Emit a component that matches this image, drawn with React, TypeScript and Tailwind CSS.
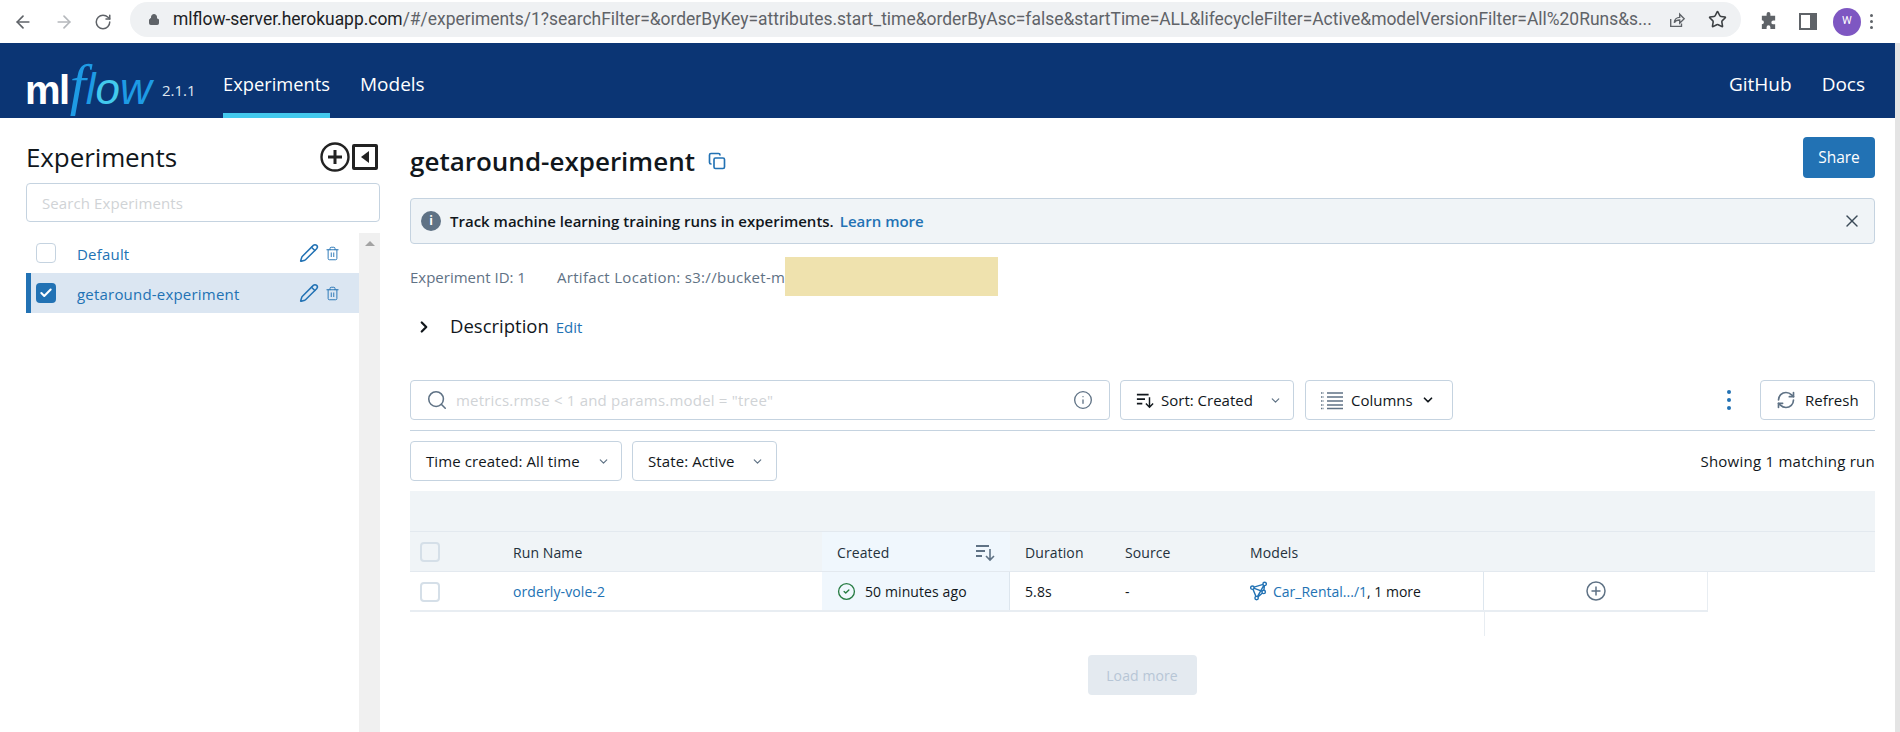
import React from 'react';
import { ArrowLeft, ArrowRight, RotateCw, Lock, Star, Pencil, Trash2, Check, ChevronDown, ChevronRight, Search, Info, X, Copy, RefreshCw, CheckCircle2 } from 'lucide-react';

const SortIcon = ({ className }: { className?: string }) => (
  <svg viewBox="0 0 20 20" className={className} fill="none" stroke="currentColor" strokeWidth="2">
    <path d="M1 4h13M1 9h9M1 14h6" />
    <path d="M15 7v11M11 14l4 4 4-4" strokeWidth="1.6" />
  </svg>
);

const ColumnsIcon = () => (
  <svg viewBox="0 0 22 20" className="w-[22px] h-[20px] text-[#5f7285]" fill="none" stroke="currentColor" strokeWidth="1.500">
    <path d="M6 3h16M6 7h16M6 11h16M6 15h16M6 18.500h16" />
    <path d="M0 3h3M0 7h3M0 11h3M0 15h3M0 18.500h3" strokeDasharray="1.500 1" />
  </svg>
);

const ModelIcon = () => (
  <svg viewBox="0 0 18 20" className="w-[17px] h-[20px] text-[#2272b4]" fill="none" stroke="currentColor" strokeWidth="1.5">
    <path d="M2.500 6.500L15.500 2.500 14.500 11 7 17.500 2.500 6.500zM2.500 6.500L14.500 11M15.500 2.500L7 17.500" />
    <circle cx="2.5" cy="6.5" r="1.8" fill="white" />
    <circle cx="15.5" cy="2.5" r="1.8" fill="white" />
    <circle cx="14.5" cy="11" r="1.8" fill="white" />
    <circle cx="7" cy="17.5" r="1.8" fill="white" />
  </svg>
);

function Logo() {
  return (
    <div className="w-[162px] pl-[25px] flex items-baseline pt-[22px] font-['Liberation_Sans',sans-serif]">
      <span className="text-[40px] leading-[40px] font-bold tracking-[-1.5px]">ml</span>
      <span className="text-[58px] leading-[40px] italic text-[#1e9be4] font-['Liberation_Serif',serif] ml-[1px]">f</span>
      <span className="text-[44px] leading-[40px] italic text-[#1e9be4]">
        l<span className="text-[#43c9ed]">o</span>w
      </span>
    </div>
  );
}

function Header() {
  return (
    <div className="h-[75px] bg-[#0b3574] flex items-stretch text-white">
      <Logo />
      <span className="text-[15px] mt-[36px] h-[20px] w-[61px] text-[#dfe7f0]">2.1.1</span>
      <div className="w-[107px] flex flex-col items-center">
        <span className="text-[18.3px] leading-[24px] mt-[29px] whitespace-nowrap">Experiments</span>
        <div className="mt-auto h-[5px] w-full bg-[#43c9ed]" />
      </div>
      <span className="ml-[30px] text-[19px] leading-[24px] mt-[29px]">Models</span>
      <span className="ml-auto text-[19px] leading-[24px] mt-[29px]">GitHub</span>
      <span className="ml-[30px] mr-[30px] text-[19px] leading-[24px] mt-[29px]">Docs</span>
    </div>
  );
}

function ChromeBar() {
  return (
    <div className="h-[43px] bg-white flex items-center text-[#5f6368] font-['Roboto',sans-serif]">
      <ArrowLeft className="ml-[13px] w-[20px] h-[20px]" strokeWidth={2} />
      <ArrowRight className="ml-[21px] w-[20px] h-[20px] text-[#b5b8bc]" strokeWidth={2} />
      <RotateCw className="ml-[20px] w-[18px] h-[18px]" strokeWidth={2} />
      <div className="ml-[18px] w-[1611px] h-[35px] -mt-[4px] rounded-full bg-[#eff1f3] flex items-center pl-[18px] pr-[14px]">
        <Lock className="w-[12px] h-[13px] fill-[#5f6368]" strokeWidth={2} />
        <span className="ml-[13px] text-[17.45px] whitespace-nowrap text-[#5f6368]">
          <span className="text-[#202124]">mlflow-server.herokuapp.com</span>/#/experiments/1?searchFilter=&amp;orderByKey=attributes.start_time&amp;orderByAsc=false&amp;startTime=ALL&amp;lifecycleFilter=Active&amp;modelVersionFilter=All%20Runs&amp;s...
        </span>
        <svg viewBox="0 0 20 20" className="ml-auto w-[18px] h-[18px]" fill="none" stroke="currentColor" strokeWidth="1.5">
          <path d="M3 9v8h12v-3M7 13c0-4 3-6 6-6V3.5l5 5-5 5V10c-3 0-5 1-6 3z" />
        </svg>
        <Star className="ml-[22px] w-[19px] h-[19px] text-[#3c4043]" strokeWidth={2} />
      </div>
      <svg viewBox="0 0 20 20" className="ml-[18px] w-[19px] h-[19px] fill-[#5f6368]">
        <path d="M8 2a2 2 0 0 1 4 0v2h5v5h-2a2 2 0 0 0 0 4h2v5h-5v-2a2 2 0 0 0-4 0v2H3v-5a2.2 2.2 0 0 0 0-4.400V4h5V2z" />
      </svg>
      <div className="ml-[21px] w-[18px] h-[17px] border-[2px] border-r-[7px] border-[#5f6368]" />
      <div className="ml-[16px] w-[28px] h-[28px] rounded-full bg-[#7e57c2] text-white text-[11px] flex items-center justify-center">W</div>
      <div className="ml-[9px] flex flex-col gap-[3px]">
        <div className="w-[3px] h-[3px] rounded-full bg-[#5f6368]" />
        <div className="w-[3px] h-[3px] rounded-full bg-[#5f6368]" />
        <div className="w-[3px] h-[3px] rounded-full bg-[#5f6368]" />
      </div>
    </div>
  );
}

function ExperimentRow({ name, selected }: { name: string; selected?: boolean }) {
  return (
    <div className={`h-[40px] flex items-center text-[#2272b4] ${selected ? 'bg-[#dbe6f2] border-l-[5px] border-[#2272b4] pl-[5px]' : 'pl-[10px]'}`}>
      {selected ? (
        <div className="w-[20px] h-[20px] rounded-[4px] bg-[#2272b4] flex items-center justify-center">
          <Check className="w-[14px] h-[14px] text-white" strokeWidth={3.5} />
        </div>
      ) : (
        <div className="w-[20px] h-[20px] rounded-[4px] border border-[#c5d3e0] bg-white" />
      )}
      <span className="ml-[21px] mt-[2px] text-[15px] tracking-[0.2px] flex-1">{name}</span>
      <Pencil className="w-[20px] h-[20px]" strokeWidth={1.8} />
      <Trash2 className="ml-[6px] mr-[19px] w-[15px] h-[15px]" strokeWidth={1.5} />
    </div>
  );
}

function Sidebar() {
  return (
    <div className="ml-[26px] w-[354px] flex flex-col">
      <div className="h-[65px] pt-[13px] flex items-center">
        <h1 className="text-[26px] leading-[34px] font-medium tracking-[-0.1px] text-[#11171c] flex-1">Experiments</h1>
        <svg viewBox="0 0 30 30" className="w-[30px] h-[30px] text-[#222]" fill="none" stroke="currentColor" strokeWidth="2.4">
          <circle cx="15" cy="15" r="13.500" />
          <path d="M15 8v14M8 15h14" strokeWidth="3" />
        </svg>
        <div className="ml-[2px] mr-[2px] w-[26px] h-[26px] border-[3px] border-[#222] rounded-[2px] flex items-center justify-center">
          <div className="w-0 h-0 border-y-[6px] border-y-transparent border-r-[8px] border-r-[#222]" />
        </div>
      </div>
      <div className="h-[39px] border border-[#c5d3e0] rounded-[4px] flex items-center pl-[15px] pt-[2px] text-[15px] tracking-[0.1px] text-[#d0d3d6]">Search Experiments</div>
      <div className="mt-[11px] flex-1 flex">
        <div className="w-[333px]">
          <ExperimentRow name="Default" />
          <ExperimentRow name="getaround-experiment" selected />
        </div>
        <div className="w-[21px] bg-[#f0f0f0] flex justify-center pt-[8px]">
          <div className="w-0 h-0 border-x-[5px] border-x-transparent border-b-[5px] border-b-[#a3a3a3]" />
        </div>
      </div>
    </div>
  );
}

function Toolbar() {
  return (
    <div className="mt-[33px] flex h-[40px] text-[15px] text-[#11171c]">
      <div className="w-[700px] border border-[#c5d3e0] rounded-[4px] flex items-center pl-[15px] pr-[16px]">
        <Search className="w-[22px] h-[22px] text-[#5f7285]" strokeWidth={1.7} />
        <span className="ml-[8px] flex-1 text-[#d0d3d6] tracking-[0.2px]">metrics.rmse &lt; 1 and params.model = "tree"</span>
        <Info className="w-[20px] h-[20px] text-[#5f7285]" strokeWidth={1.6} />
      </div>
      <div className="ml-[10px] w-[174px] border border-[#c5d3e0] rounded-[4px] flex items-center pl-[15px]">
        <SortIcon className="w-[18px] h-[18px]" />
        <span className="ml-[7px]">Sort: Created</span>
        <ChevronDown className="ml-[16px] w-[13px] h-[13px] text-[#5f7285]" strokeWidth={2.2} />
      </div>
      <div className="ml-[11px] w-[148px] border border-[#c5d3e0] rounded-[4px] flex items-center pl-[15px]">
        <ColumnsIcon />
        <span className="ml-[8px]">Columns</span>
        <ChevronDown className="ml-[8px] w-[14px] h-[14px]" strokeWidth={3} />
      </div>
      <div className="ml-auto mr-[29px] flex flex-col justify-center gap-[4px]">
        <div className="w-[4px] h-[4px] rounded-full bg-[#2272b4]" />
        <div className="w-[4px] h-[4px] rounded-full bg-[#2272b4]" />
        <div className="w-[4px] h-[4px] rounded-full bg-[#2272b4]" />
      </div>
      <div className="w-[115px] border border-[#c5d3e0] rounded-[4px] flex items-center pl-[15px]">
        <RefreshCw className="w-[20px] h-[20px] text-[#5f7285]" strokeWidth={2} />
        <span className="ml-[9px]">Refresh</span>
      </div>
    </div>
  );
}

function RunsTable() {
  return (
    <div className="mt-[10px] text-[14px] tracking-[0.1px]">
      <div className="h-[41px] bg-[#f0f4f7] border-b border-[#e3e9ef]" />
      <div className="h-[40px] bg-[#f0f4f7] border-b border-[#e3e9ef] flex items-center text-[#24313c]">
        <div className="ml-[10px] w-[20px] h-[20px] rounded-[4px] border-[2px] border-[#d5dfe8]" />
        <span className="ml-[73px] w-[309px] mt-[1px]">Run Name</span>
        <div className="w-[188px] h-full bg-[#f0f7fd] flex items-center pl-[15px] pr-[15px]">
          <span className="flex-1 mt-[1px]">Created</span>
          <SortIcon className="w-[20px] h-[20px] text-[#5f7285]" />
        </div>
        <span className="ml-[15px] w-[100px] mt-[1px]">Duration</span>
        <span className="w-[125px] mt-[1px]">Source</span>
        <span className="mt-[1px]">Models</span>
      </div>
      <div className="h-[40px] border-b-[2px] border-[#e8edf2] flex items-stretch w-[1298px] text-[#11171c]">
        <div className="ml-[10px] mt-[10px] w-[20px] h-[20px] rounded-[4px] border-[2px] border-[#d5dfe8]" />
        <span className="ml-[73px] w-[309px] self-center text-[#2272b4]">orderly-vole-2</span>
        <div className="w-[188px] bg-[#f0f7fd] border-r border-[#dde6ee] flex items-center pl-[15px]">
          <CheckCircle2 className="w-[19px] h-[19px] text-[#277c43]" strokeWidth={1.7} />
          <span className="ml-[9px]">50 minutes ago</span>
        </div>
        <span className="ml-[15px] w-[100px] self-center">5.8s</span>
        <span className="w-[125px] self-center">-</span>
        <div className="w-[234px] flex items-center border-r border-[#dde6ee]">
          <ModelIcon />
          <span className="ml-[6px] text-[#2272b4] tracking-normal">Car_Rental.../1</span>
          <span className="tracking-normal">, 1 more</span>
        </div>
        <div className="flex-1 border-r border-[#e8edf2] flex items-center justify-center">
          <svg viewBox="0 0 20 20" className="w-[20px] h-[20px] text-[#5f7285]" fill="none" stroke="currentColor" strokeWidth="1.500">
            <circle cx="10" cy="10" r="9" />
            <path d="M10 5.500v9M5.500 10h9" />
          </svg>
        </div>
      </div>
      <div className="h-[24px] w-[1075px] border-r border-[#e8edf2]" />
      <div className="mt-[19px] flex justify-center">
        <div className="-ml-[1px] w-[109px] h-[40px] rounded-[4px] bg-[#e4eaf0] text-[#b7c6d6] flex items-center justify-center">Load more</div>
      </div>
    </div>
  );
}

function MainPanel() {
  return (
    <div className="ml-[30px] w-[1465px] flex flex-col">
      <div className="mt-[19px] h-[41px] flex items-start">
        <h2 className="mt-[7px] text-[26px] leading-[34px] font-semibold text-[#11171c]">getaround-experiment</h2>
        <Copy className="ml-[13px] mt-[15px] w-[18px] h-[18px] text-[#2272b4]" strokeWidth={2.2} />
        <div className="ml-auto w-[72px] h-[41px] rounded-[4px] bg-[#2272b4] text-white text-[15.500px] flex items-center justify-center">Share</div>
      </div>
      <div className="mt-[20px] h-[46px] rounded-[4px] border border-[#c5d3e0] bg-[#f0f4f7] flex items-center pl-[10px] pr-[12px] text-[15px]">
        <div className="w-[20px] h-[20px] rounded-full bg-[#5f7285] text-white text-[12px] font-bold flex items-center justify-center">i</div>
        <span className="ml-[9px] mt-[1px] font-semibold text-[#11171c]">Track machine learning training runs in experiments.</span>
        <span className="ml-[6px] mt-[1px] font-semibold text-[#2272b4]">Learn more</span>
        <X className="ml-auto w-[20px] h-[20px] text-[#3b4a58]" strokeWidth={1.7} />
      </div>
      <div className="mt-[13px] h-[39px] flex items-center text-[15px] text-[#5f7285]">
        <span className="mt-[2px]">Experiment ID: 1</span>
        <span className="ml-[31px] mt-[2px] tracking-[0.3px]">Artifact Location: s3://bucket-m</span>
        <div className="w-[213px] h-[39px] bg-[#efe2ae]" />
      </div>
      <div className="mt-[11px] h-[40px] flex items-center">
        <ChevronRight className="ml-[5px] w-[18px] h-[18px] text-[#11171c]" strokeWidth={3} />
        <span className="ml-[17px] -mt-[2px] text-[18.500px] text-[#11171c]">Description</span>
        <span className="ml-[7px] text-[15px] text-[#2272b4]">Edit</span>
      </div>
      <Toolbar />
      <div className="mt-[10px] border-t border-[#c5d3e0]" />
      <div className="mt-[10px] h-[40px] flex items-center text-[15px] tracking-[0.1px] text-[#11171c]">
        <div className="w-[212px] h-full border border-[#c5d3e0] rounded-[4px] flex items-center pl-[15px]">
          <span className="whitespace-nowrap">Time created: All time</span>
          <ChevronDown className="ml-[17px] w-[13px] h-[13px] text-[#5f7285]" strokeWidth={2.2} />
        </div>
        <div className="ml-[10px] w-[145px] h-full border border-[#c5d3e0] rounded-[4px] flex items-center pl-[15px]">
          <span>State: Active</span>
          <ChevronDown className="ml-[16px] w-[13px] h-[13px] text-[#5f7285]" strokeWidth={2.2} />
        </div>
        <span className="ml-auto tracking-[0.25px]">Showing 1 matching run</span>
      </div>
      <RunsTable />
    </div>
  );
}

export default function App() {
  return (
    <div className="w-[1900px] h-[732px] overflow-hidden bg-white flex flex-col font-['Open_Sans',sans-serif]">
      <ChromeBar />
      <div className="flex flex-1 min-h-0">
        <div className="w-[1895px] flex flex-col">
          <Header />
          <div className="flex flex-1 min-h-0">
            <Sidebar />
            <MainPanel />
          </div>
        </div>
        <div className="w-[5px] bg-[#e4e4e4]" />
      </div>
    </div>
  );
}
